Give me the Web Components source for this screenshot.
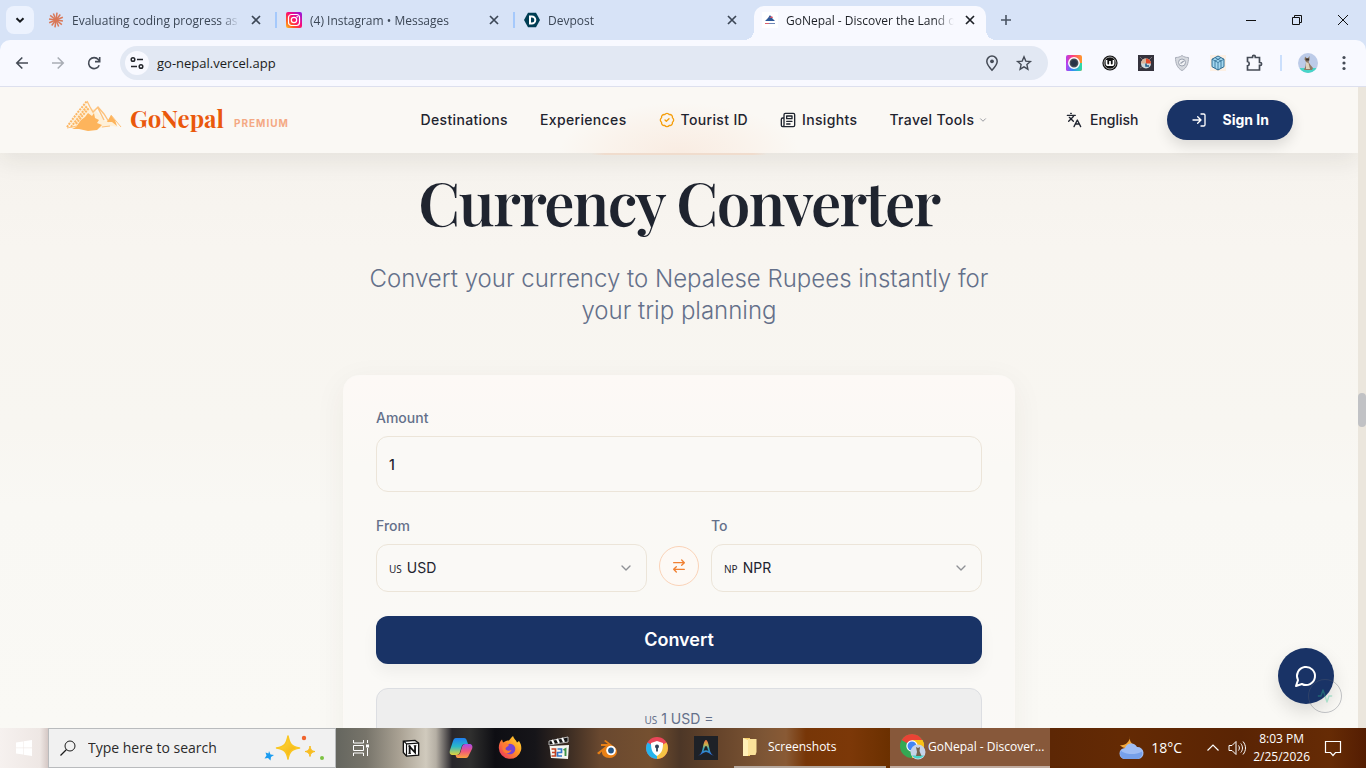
<!DOCTYPE html>
<html lang="en">
<head>
<meta charset="utf-8">
<meta name="viewport" content="width=device-width, initial-scale=1">
<title>GoNepal - Discover the Land of the Himalayas</title>
<style>
  html, body { margin: 0; height: 100%; }
  body {
    --ui: "Open Sans", "Noto Sans", sans-serif;
    --serif: "Playfair Display", "Liberation Serif", serif;
    --ink: #1f242f;
    --slate: #64708a;
    --navy: #193366;
    --orange: #ea580c;
    --line: #ece5d9;
    font-family: Inter, sans-serif;
    color: var(--ink);
    overflow: hidden;
  }
</style>
</head>
<body>
<app-desktop>
  <tab-strip slot="tabs">
    <browser-tab icon="claude">Evaluating coding progress as a beginner</browser-tab>
    <browser-tab icon="instagram">(4) Instagram • Messages</browser-tab>
    <browser-tab icon="devpost" last>Devpost</browser-tab>
    <browser-tab icon="gonepal" active>GoNepal - Discover the Land of the Himalayas</browser-tab>
  </tab-strip>
  <browser-toolbar slot="toolbar"></browser-toolbar>
  <web-page slot="page">
    <site-header slot="header"></site-header>
    <currency-section></currency-section>
    <chat-launcher slot="overlay"></chat-launcher>
  </web-page>
  <task-bar slot="taskbar"></task-bar>
</app-desktop>

<script>
const define = (name, html, setup) => {
  const tpl = document.createElement('template');
  tpl.innerHTML = html;
  customElements.define(name, class extends HTMLElement {
    constructor() {
      super();
      this.attachShadow({ mode: 'open' }).append(tpl.content.cloneNode(true));
    }
    connectedCallback() { if (setup) setup(this, this.shadowRoot); }
  });
};

const L = body => `<svg viewBox="0 0 24 24" fill="none" stroke="currentColor" stroke-width="2" stroke-linecap="round" stroke-linejoin="round">${body}</svg>`;
const S = (box, body) => `<svg viewBox="0 0 ${box} ${box}" fill="none">${body}</svg>`;
const rays = Array.from({ length: 12 }, (_, i) => `<path d="M8 8V${i % 2 ? 1 : 0.6}" transform="rotate(${i * 30 + 8} 8 8)"/>`).join('');

const ICONS = {
  'chevron-down': L('<path d="m6 9 6 6 6-6"/>'),
  'badge-check': L('<path d="M3.85 8.62a4 4 0 0 1 4.78-4.77 4 4 0 0 1 6.74 0 4 4 0 0 1 4.78 4.78 4 4 0 0 1 0 6.74 4 4 0 0 1-4.77 4.78 4 4 0 0 1-6.75 0 4 4 0 0 1-4.78-4.77 4 4 0 0 1 0-6.76Z"/><path d="m9 12 2 2 4-4"/>'),
  newspaper: L('<path d="M4 22h16a2 2 0 0 0 2-2V4a2 2 0 0 0-2-2H8a2 2 0 0 0-2 2v16a2 2 0 0 1-2 2Zm0 0a2 2 0 0 1-2-2v-9c0-1.100.9-2 2-2h2"/><path d="M18 14h-8M15 18h-5M10 6h8v4h-8z"/>'),
  languages: L('<path d="m5 8 6 6M4 14l6-6 2-3M2 5h12M7 2h1M22 22l-5-10-5 10M14 18h6"/>'),
  'log-in': L('<path d="M15 3h4a2 2 0 0 1 2 2v14a2 2 0 0 1-2 2h-4"/><path d="m10 17 5-5-5-5M15 12H3"/>'),
  swap: L('<path d="m16 3 4 4-4 4M20 7H4M8 21l-4-4 4-4M4 17h16"/>'),
  chat: L('<path d="M7.900 20A9 9 0 1 0 4 16.100L2 22Z"/>'),
  activity: L('<path d="M22 12h-4l-3 9L9 3l-3 9H2"/>'),
  close: S(16, '<path d="m4 4 8 8m0-8-8 8" stroke="currentColor" stroke-width="1.700"/>'),
  plus: S(16, '<path d="M8 3v10M3 8h10" stroke="currentColor" stroke-width="1.600"/>'),
  search: S(16, '<circle cx="10" cy="6" r="5" stroke="currentColor"/><path d="m6.500 9.500-6 6" stroke="currentColor" stroke-width="1.200"/>'),
  'tab-search': S(16, '<path d="m4.500 6.200 3.500 3.500 3.500-3.500" stroke="currentColor" stroke-width="2"/>'),
  back: S(16, '<path d="M14 8H3M8.300 2.500 2.800 8l5.500 5.500" stroke="currentColor" stroke-width="1.600"/>'),
  forward: S(16, '<path d="M2 8h11M7.700 2.500 13.200 8l-5.500 5.500" stroke="currentColor" stroke-width="1.600"/>'),
  reload: S(16, '<path d="M13.200 10.200A5.500 5.500 0 1 1 12.300 4.500L13.500 6" stroke="currentColor" stroke-width="1.600"/><path d="M13.700 2v4.600H9" stroke="currentColor" stroke-width="1.600"/>'),
  tune: S(16, '<circle cx="4" cy="4.500" r="1.800" stroke="currentColor" stroke-width="1.500"/><path d="M8 4.500h6M2 11.500h6" stroke="currentColor" stroke-width="1.600"/><circle cx="12" cy="11.500" r="1.800" stroke="currentColor" stroke-width="1.500"/>'),
  pin: S(16, '<path d="M8 15.200C4.500 11.500 2.800 9 2.800 6.300a5.200 5.200 0 0 1 10.400 0c0 2.700-1.700 5.200-5.200 8.900Z" stroke="currentColor" stroke-width="1.500"/><circle cx="8" cy="6.300" r="1.900" fill="currentColor"/>'),
  star: S(16, '<path d="m8 1.800 1.800 4.300 4.600.4-3.500 3.100 1 4.600L8 11.800l-3.900 2.400 1-4.600-3.500-3.100 4.600-.4Z" stroke="currentColor" stroke-width="1.400"/>'),
  puzzle: S(18, '<path d="M2.500 3.500h5V2.800a1.400 1.400 0 0 1 2.800 0v.7h4.200v5h.7a1.400 1.400 0 0 1 0 2.800h-.7v4.700h-12v-4.200a2.200 2.200 0 0 0 0-4.300Z" stroke="currentColor" stroke-width="1.700"/>'),
  dots: S(16, '<g fill="currentColor"><circle cx="8" cy="2.500" r="1.600"/><circle cx="8" cy="8" r="1.600"/><circle cx="8" cy="13.500" r="1.600"/></g>'),
  minimize: S(10, '<path d="M0 5.500h10" stroke="currentColor"/>'),
  restore: S(10, '<path d="M.5 2.500h7v7h-7zM2.500 2.500v-2h7v7h-2" stroke="currentColor"/>'),
  exit: S(10, '<path d="m0 0 10 10M10 0 0 10" stroke="currentColor"/>'),
  claude: S(16, `<g stroke="#d97757" stroke-width="1.500">${rays}</g>`),
  instagram: S(16, '<defs><linearGradient id="ig" x1="1" y1="0" x2="0" y2="1"><stop offset="0" stop-color="#8a1be8"/><stop offset=".45" stop-color="#fb0b78"/><stop offset=".75" stop-color="#ff5a1e"/><stop offset="1" stop-color="#ffc32a"/></linearGradient></defs><rect width="16" height="16" rx="2" fill="url(#ig)"/><rect x="2.500" y="2.500" width="11" height="11" rx="3" stroke="#fff" stroke-width="1.200"/><circle cx="8" cy="8" r="2.700" stroke="#fff" stroke-width="1.200"/><circle cx="11.200" cy="4.800" r=".8" fill="#fff"/>'),
  devpost: S(16, '<path d="M4 .8h8L16 8l-4 7.200H4L0 8Z" fill="#003e54"/><path d="M6 4.500h1.800a3.500 3.500 0 0 1 0 7H6Z" stroke="#fff" stroke-width="2"/>'),
  gonepal: S(16, '<path d="M0 0h16v16H0z" fill="#fff"/><path d="m3 9 3-3 2-3 2 3 3 3Z" fill="#2d5797"/><path d="m7 6 3-2 1 2Z" fill="#d2556b"/><path d="M3 11.500h4" stroke="#dc6370"/><path d="M7 11.500h6" stroke="#6f87b7"/>'),
  colorwheel: S(16, '<defs><linearGradient id="cw" x1="0" y1="0" x2="1" y2="0"><stop stop-color="#b43cf0"/><stop offset=".4" stop-color="#ff3f7c"/><stop offset="1" stop-color="#ff9a2a"/></linearGradient><linearGradient id="cw2" x1="0" y1="0" x2="1" y2="0"><stop stop-color="#c43cf0"/><stop offset=".4" stop-color="#2f8cf8"/><stop offset="1" stop-color="#2fe0a0"/></linearGradient></defs><rect width="16" height="16" rx="2" fill="url(#cw)"/><path d="M0 8h16v6a2 2 0 0 1-2 2H2a2 2 0 0 1-2-2Z" fill="url(#cw2)"/><circle cx="8" cy="8" r="5.200" fill="#454b57" stroke="#fff" stroke-width="1.500"/><circle cx="8" cy="8" r="3" fill="#273447"/>'),
  wave: S(16, '<circle cx="8" cy="8" r="7.600" fill="#111"/><circle cx="8" cy="8" r="6" stroke="#ccc" stroke-width=".8"/><path d="M4.500 5v3.500a1.700 1.700 0 0 0 3.500 0V6v2.500a1.700 1.700 0 0 0 3.500 0V5" stroke="#fff" stroke-width="1.700"/>'),
  timer: S(16, '<path d="M0 0h16v16H0z" fill="#35333d"/><path d="M2 2l3 3M14 2l-3 3M2 13l3-2" stroke="#76717a"/><circle cx="8" cy="8.500" r="5" fill="#cbd9dd"/><path d="M8 8.500v-5a5 5 0 0 1 5 5Z" fill="#e34b2b"/><path d="M8 3.500a5 5 0 0 0-5 5h5Z" fill="#d9b49a"/><path d="M8 8.500v2.500h3" stroke="#1f5b87" stroke-width="1.500"/>'),
  shield: S(16, '<path d="M8 .5C6 2 4 2.500 1.500 2.500 1.500 8 3 13 8 15.600c5-2.600 6.500-7.600 6.500-13.100C12 2.500 10 2 8 .5Z" fill="#d6d9df" stroke="#a9aeb9"/><circle cx="8" cy="7.500" r="3.500" fill="#f1f2f5" stroke="#9ca3b0"/><path d="M6.500 8.500 9.800 6" stroke="#9ca3b0" stroke-width="1.400"/>'),
  cube: S(16, '<path d="M0 0h16v16H0z" fill="#fdf0e4"/><path d="m8 1 6 3.200v7.500L8 15l-6-3.300V4.200Z" fill="#a4d8f0" stroke="#2c6a91"/><path d="m2 4.200 6 3.300 6-3.300M8 7.500V15M5 2.600l6 3.400v7M11 2.600 5 6v7" stroke="#2c6a91" stroke-width=".8"/>'),
  avatar: S(20, '<defs><clipPath id="av"><circle cx="10" cy="10" r="10"/></clipPath></defs><g clip-path="url(#av)"><path d="M0 0h20v20H0z" fill="#bccbe8"/><path d="M0 15h20v5H0z" fill="#47d5c8"/><path d="M7 3.500 8.500 5H10l1.500-2v4L10.500 9l2 3 2.500 3-1 2H6l1.500-4L8 9 6.500 6.500Z" fill="#8f7a63"/><path d="m8 9 2.500 1 1.500 6H8Z" fill="#ded2bd"/><path d="M7.500 5.500h3.500v2H8Z" fill="#3d3430"/></g>'),
  windows: S(16, '<path d="m0 2.400 7-1v6.200H0ZM7.600 1.300 16 0v7.600H7.600ZM0 8.300h7v6.300l-7-1ZM7.600 8.300H16V16l-8.400-1.300Z" fill="currentColor"/>'),
  sparkles: S(60, '<defs><linearGradient id="sp" x1="0" y1="0" x2="1" y2="1"><stop stop-color="#ffdf4a"/><stop offset="1" stop-color="#f2a900"/></linearGradient></defs><path d="M22 18c1.500 8 3.500 10.500 11.500 12-8 1.500-10 3.500-11.500 11-1.500-7.500-3.500-9.500-11.500-11 8-1.500 10-4 11.500-12Z" fill="url(#sp)" stroke="#f9c623" stroke-width="1.500" stroke-linejoin="round"/><path d="M44 28c.8 4 1.700 5 5 5.500-3.300.6-4.200 1.500-5 5-.8-3.500-1.700-4.400-5-5 3.300-.5 4.200-1.500 5-5.500Z" fill="#f8bd20" stroke="#f8bd20"/><path d="m3 33 1.500 3.500 3.500.5-3 2-.5 3.500L2 40l-3.500.5L.5 37.500-.5 34.500 2.500 35.500Z" fill="#1b9cf0"/><circle cx="38" cy="20" r="2.200" fill="#f0642d"/><circle cx="56" cy="40" r="2" fill="#7cc243"/>'),
  taskview: S(18, '<path d="M1.500 1v3h10V1M1.500 17v-3h10v3M1.500 6.500h10v5h-10zM15.500 1v3M15.500 9v8" stroke="currentColor"/><path d="M14 5.500h3v3h-3z" fill="currentColor"/>'),
  notion: S(20, '<path d="m1.500 2.500 13-1 4 3V18l-13.500 1-3.500-4Z" fill="#fff" stroke="#111" stroke-width="1.500"/><path d="m5 5.500 13-1M5 5.500V19M5 5.500l-3-3" stroke="#111" stroke-width="1.300"/><path d="M8.500 16V8.500L14.500 15V7.500" stroke="#111" stroke-width="2"/><path d="M7 8h3M13 7.500h3M7 16h3" stroke="#111"/>'),
  copilot: S(24, '<defs><linearGradient id="cp1" x1="0" y1="0" x2="0" y2="1"><stop stop-color="#1f7ef0"/><stop offset=".5" stop-color="#2ab9c9"/><stop offset="1" stop-color="#e4d239"/></linearGradient><linearGradient id="cp2" x1="0" y1="0" x2="0" y2="1"><stop stop-color="#a64cf0"/><stop offset=".5" stop-color="#f0567c"/><stop offset="1" stop-color="#fba33e"/></linearGradient></defs><path d="M7 2h8c2 0 2.500 1.500 3 3l1 3h-3c-2 0-3 1-3.500 3L11 16c-.5 2-1.500 3-3.500 3H4c-3 0-4-2-3-5L4 5c.7-2 1.500-3 3-3Z" fill="url(#cp1)"/><path d="M17 22H9c-2 0-2-1.500-2.500-3h1.500c2 0 3-1 3.500-3l1.500-5c.6-2 1.500-3 3.500-3H20c3 0 4 2 3 5l-3 6c-.7 2-1.500 3-3 3Z" fill="url(#cp2)"/>'),
  firefox: S(24, '<defs><linearGradient id="ff" x1="1" y1="0" x2="0" y2="1"><stop stop-color="#ffe437"/><stop offset=".45" stop-color="#ff9425"/><stop offset="1" stop-color="#ed2468"/></linearGradient></defs><path d="M15 0c1 3 3 4 4 6.500l2-1.500c2 3 2.800 6 2 9.500A11.300 11.300 0 0 1 .8 12C.8 8 2 5.500 4 3.500l1 3 3-1.500c1-.5 2-.5 3-.5 1-1 2-3 4-4.500Z" fill="url(#ff)"/><circle cx="12" cy="13" r="5.300" fill="#7543d4"/><path d="M4.500 8c3-1.500 5-1 6.500 1-1 2-3 1.500-3.500 3.500 0 2 3 3 6 1.500-1.500 4.500-8 4-9-.5Z" fill="#ff7a32"/>'),
  clapper: S(24, '<path d="M2 5 21 1v5L2 9Z" fill="#151515" stroke="#ddd" stroke-width=".8"/><path d="m5 4 2 4M10 3l2 4M15 2l2 4" stroke="#fff" stroke-width="2"/><path d="M2.500 10 22 9l-1 14-17-1Z" fill="#f5f5f0"/><path d="M4.500 13h4v7h-4M5 16.500h3.500" stroke="#c34223" stroke-width="1.700"/><path d="M10.500 13h4v3.500h-4V20h4.500" stroke="#3177c9" stroke-width="1.700"/><path d="m16.500 14 2-1v7" stroke="#3c9448" stroke-width="1.900"/>'),
  blender: S(24, '<path d="M1 17 10 10H5V8h7l-4-3 1.500-1 9 7c5 4 2 11-5 11-5 0-8-3-7.500-6.500L3 18.500Z" fill="#e98015"/><circle cx="15" cy="14.500" r="4.800" fill="#fff"/><circle cx="15" cy="14.500" r="2.900" fill="#265787"/>'),
  guard: S(24, '<circle cx="12" cy="12" r="11" fill="#ea4659"/><path d="M12 12 2.500 6.500A11 11 0 0 0 12 23Z" fill="#25b5ee"/><path d="M12 12 21.500 6.500A11 11 0 0 1 12 23Z" fill="#f6c344"/><path d="m12 5 6 2c0 6-1 10-6 13-5-3-6-7-6-13Z" fill="#fff"/><circle cx="12" cy="10.500" r="2" fill="#32435a"/><path d="M12 11v4.500" stroke="#32435a" stroke-width="1.800"/>'),
  arc: S(24, '<defs><linearGradient id="ar" x1="0" y1="0" x2="0" y2="1"><stop stop-color="#ee6b3d"/><stop offset=".3" stop-color="#c9b34b"/><stop offset=".55" stop-color="#34a8bb"/><stop offset="1" stop-color="#2f63e5"/></linearGradient></defs><path d="M0 0h24v24H0z" fill="#1e2127"/><path d="M4 19.500c4-1 4.500-7 5.500-11C10.200 5.500 11 4 12 4s1.800 1.500 2.500 4.500c1 4 1.500 10 5.500 11-3.500-.5-5.500-3.500-8-3.500s-4.500 3-8 3.500Z" fill="url(#ar)"/><path d="M9.500 15c1-2 1.200-5 2.500-5s1.500 3 2.500 5c-1.700-1-3.300-1-5 0Z" fill="#1e2127"/>'),
  folder: S(20, '<path d="M3 1h7v18H3z" fill="#f6cf6b"/><path d="M8 2h8.500v13l-1 3H8Z" fill="#fbe29a"/><path d="m3 1 5 2v16H3Z" fill="#fff0b8"/>'),
  chrome: S(26, '<circle cx="12" cy="12" r="12" fill="#34a853"/><path d="M12 12 1.600 6A12 12 0 0 1 22.400 6Z" fill="#ea4335"/><path d="M12 12h12A12 12 0 0 0 22.400 6H12Z" fill="#fbc116"/><path d="M12 24a12 12 0 0 0 10.400-18H12Z" fill="#fbc116"/><circle cx="12" cy="12" r="5.700" fill="#fff"/><circle cx="12" cy="12" r="4.500" fill="#4285f4"/><circle cx="18" cy="18" r="7.500" fill="#c6d3e8"/><path d="M12 21.500a7.500 7.500 0 0 0 12 0Z" fill="#47d5c8"/><path d="m16 13 2 1 2-1-.5 4 2 5h-5.500l1-4Z" fill="#75634f"/>'),
  weather: S(24, '<path d="M11 0c-1 4 1 8 5 9-1 5-7 6-10 3-3-.5-4-2-5-3 5 1 10-3 10-9Z" fill="#f3a83b"/><path d="M6 23a5.500 5.500 0 0 1 0-11 6.500 6.500 0 0 1 12-1 6 6 0 0 1 1 12Z" fill="#9fbdf4"/><path d="M6 23a5.500 5.500 0 0 1-4-8.500c3 4 14 5 21 1A6 6 0 0 1 19 23Z" fill="#76a0ea"/>'),
  'chevron-up': S(14, '<path d="m1.500 9.500 5.500-5.500 5.500 5.500" stroke="currentColor" stroke-width="1.200"/>'),
  volume: S(18, '<path d="M1 6.500h3l4-4v13l-4-4H1Z" stroke="currentColor"/><path d="M10.500 6.500c1.200 1.500 1.200 3.500 0 5M12.800 4.500c2.200 2.700 2.200 6.300 0 9M15 2.500c3.300 4 3.300 9 0 13" stroke="currentColor"/>'),
  notice: S(18, '<path d="M1.500 2.500h15v11h-5L9 16.500l-2.500-3h-5Z" stroke="currentColor" stroke-width="1.200"/>')
};

define('ui-icon', `<style>
  :host { display: block; flex: none; width: 16px; height: 16px; }
  svg { display: block; width: 100%; height: 100%; overflow: visible; }
</style>`, (el, root) => {
  root.innerHTML += ICONS[el.getAttribute('name')] || '';
});

define('mountain-logo', `<style>
  :host { display: block; flex: none; width: 56px; height: 32px; }
  svg { display: block; width: 100%; height: 100%; }
</style>
<svg viewBox="0 0 56 32" fill="none">
  <path d="M3 28 6 21 11 15 16 9 20 4 23 9 28 9 33 14 39 21 46 18 52 27 46 26 38 27 35 28 22 30 9 28Z" fill="#fef0d8"/>
  <path d="M10 27 15 20 19 17 22 13 26 16 28 13 29 18 33 20 31 23 36 25 31 30 22 31 13 29 6 29Z" fill="#fdb45c"/>
  <path d="M1 27 6 20 12 12 17 6 21 1M5 27l7-9 9-12M10 24l7-9 6-7" stroke="#fcb765" stroke-width="2" stroke-dasharray="2 1"/>
  <path d="m21 1 3 6 3 5 5-5 6 7 5 8M32 8l6 12" stroke="#fdc27c" stroke-width="1.400"/>
  <path d="m41 22 4-7 4 5 2 6-5-4Z" fill="#fdb45c"/>
  <path d="m45 15 10 12M1 28l10-2M36 27l8-1" stroke="#fdc27c"/>
</svg>`);

define('app-desktop', `<style>
  :host { display: grid; grid-template-rows: auto auto minmax(0, 1fr) auto; height: 100vh; background: #d7e3f7; }
  ::slotted(*) { min-width: 0; min-height: 0; }
</style>
<slot name="tabs"></slot><slot name="toolbar"></slot><slot name="page"></slot><slot name="taskbar"></slot>`);

define('tab-strip', `<style>
  :host { display: flex; align-items: flex-end; height: 40px; font: 12px/16px var(--ui); color: #3c4756; }
  button { border: 0; padding: 0; background: none; color: inherit; display: grid; place-items: center; }
  .menu { width: 28px; height: 28px; margin: 0 6px; align-self: center; border-radius: 8px; background: #ecf2fe; color: #16191e; }
  .tabs { display: flex; flex: 0 1 952px; min-width: 0; }
  .new { width: 28px; height: 40px; color: #4a5463; }
  .window { display: flex; margin-left: auto; align-self: flex-start; color: #111; }
  .window button { width: 46px; height: 40px; }
  .window ui-icon { width: 10px; height: 10px; }
</style>
<button class="menu" aria-label="Search tabs"><ui-icon name="tab-search"></ui-icon></button>
<div class="tabs"><slot></slot></div>
<button class="new" aria-label="New tab"><ui-icon name="plus"></ui-icon></button>
<div class="window">
  <button aria-label="Minimize"><ui-icon name="minimize"></ui-icon></button>
  <button aria-label="Restore"><ui-icon name="restore"></ui-icon></button>
  <button aria-label="Close window"><ui-icon name="exit"></ui-icon></button>
</div>`);

define('browser-tab', `<style>
  :host { display: block; flex: 1 1 238px; min-width: 0; box-sizing: border-box; padding-right: 6px; }
  .tab { position: relative; display: flex; align-items: center; gap: 8px; height: 34px; padding: 0 8px 6px; box-sizing: border-box; }
  .title { flex: 1; min-width: 0; padding-top: 2px; white-space: nowrap; overflow: hidden; -webkit-mask-image: linear-gradient(90deg, #000 calc(100% - 20px), transparent); mask-image: linear-gradient(90deg, #000 calc(100% - 20px), transparent); }
  button { border: 0; padding: 0; width: 16px; height: 16px; background: none; color: inherit; }
  .edge { position: absolute; right: -5px; top: 6px; width: 2px; height: 16px; background: #a5c9fc; }
  :host([active]) .tab { background: #f8f9ff; border-radius: 10px 10px 0 0; color: #1d2026; }
  :host([active]) .edge, :host([last]) .edge { display: none; }
  :host([active]) .tab::before, :host([active]) .tab::after { content: ""; position: absolute; bottom: 0; width: 10px; height: 10px; }
  :host([active]) .tab::before { right: 100%; background: radial-gradient(circle at 0 0, transparent 10px, #f8f9ff 10px); }
  :host([active]) .tab::after { left: 100%; background: radial-gradient(circle at 100% 0, transparent 10px, #f8f9ff 10px); }
</style>
<div class="tab"><ui-icon></ui-icon><span class="title"><slot></slot></span><button aria-label="Close tab"><ui-icon name="close"></ui-icon></button><span class="edge"></span></div>`,
(el, root) => {
  const icon = document.createElement('ui-icon');
  icon.setAttribute('name', el.getAttribute('icon'));
  root.querySelector('ui-icon').replaceWith(icon);
});

define('browser-toolbar', `<style>
  :host { display: flex; align-items: center; height: 46px; padding: 0 4px; background: #f8f9ff; border-bottom: 1px solid #dde0ee; border-radius: 10px 10px 0 0; color: #454b56; }
  button { flex: none; display: grid; place-items: center; width: 36px; height: 36px; border: 0; padding: 0; background: none; color: inherit; }
  .fwd { color: #a9adb5; }
  .bar { flex: 1; display: flex; align-items: center; height: 34px; margin: 0 8px; box-sizing: border-box; padding: 0 8px 0 5px; border-radius: 17px; background: #e2e8f3; }
  .bar button { width: 32px; height: 34px; }
  .bar .site { width: 24px; height: 24px; border-radius: 12px; background: #f8f9ff; color: #22252b; }
  input { flex: 1; min-width: 0; margin: 0 0 0 8px; padding: 0; border: 0; background: none; outline: 0; font: 13px/20px var(--ui); color: #1b1c20; }
  .rule { width: 2px; height: 16px; margin: 0 8px; background: #cbdffc; }
  .big { width: 20px; height: 20px; }
  .mid { width: 18px; height: 18px; }
</style>
<button aria-label="Back"><ui-icon name="back"></ui-icon></button>
<button class="fwd" aria-label="Forward"><ui-icon name="forward"></ui-icon></button>
<button aria-label="Reload"><ui-icon name="reload"></ui-icon></button>
<div class="bar">
  <button class="site" aria-label="Site information"><ui-icon name="tune"></ui-icon></button>
  <input aria-label="Address" value="go-nepal.vercel.app">
  <button aria-label="Location"><ui-icon name="pin"></ui-icon></button>
  <button aria-label="Bookmark"><ui-icon name="star"></ui-icon></button>
</div>
<button aria-label="Color picker"><ui-icon name="colorwheel"></ui-icon></button>
<button aria-label="Wave"><ui-icon name="wave"></ui-icon></button>
<button aria-label="Timer"><ui-icon name="timer"></ui-icon></button>
<button aria-label="Shield"><ui-icon name="shield"></ui-icon></button>
<button aria-label="Cube"><ui-icon name="cube"></ui-icon></button>
<button aria-label="Extensions"><ui-icon class="mid" name="puzzle"></ui-icon></button>
<span class="rule"></span>
<button aria-label="Profile"><ui-icon class="big" name="avatar"></ui-icon></button>
<button aria-label="Menu"><ui-icon name="dots"></ui-icon></button>`);

define('web-page', `<style>
  :host { position: relative; display: flex; overflow: hidden; }
  .view { position: relative; flex: 1; min-width: 0; overflow: hidden; background: linear-gradient(#f4f1ec, #f8f5f0 160px, #f8f6f1 340px, #f9f8f4 420px, #faf9f5); }
  .scroll { flex: none; width: 8px; background: #ebe6dd; }
  .thumb { height: 34px; margin-top: 306px; border-radius: 4px; background: #c1c2c5; }
</style>
<div class="view"><slot name="header"></slot><slot></slot><slot name="overlay"></slot></div>
<div class="scroll"><div class="thumb"></div></div>`);

define('site-header', `<style>
  :host { position: relative; z-index: 1; display: flex; align-items: center; justify-content: space-between; height: 66px; padding: 0 65px; background: radial-gradient(120px 50px at 50% 100%, #f9ece2, #faf3ec 60%, transparent) #faf8f4; box-shadow: 0 8px 24px rgba(40, 35, 25, .08); font-size: 14px; line-height: 20px; font-weight: 500; }
  a { color: inherit; text-decoration: none; display: flex; align-items: center; gap: 6px; white-space: nowrap; }
  .brand { gap: 8px; padding: 0 54px 4px 1px; }
  .brand mountain-logo { margin-bottom: 4px; }
  .name { font: 700 24px/32px var(--serif); color: var(--orange); }
  .tier { margin: 10px 0 0 2px; font-size: 10px; font-weight: 700; letter-spacing: 1px; color: #f4a984; }
  nav, .side { display: flex; align-items: center; gap: 32px; }
  nav { letter-spacing: .025em; }
  .side { gap: 28px; }
  .gold { color: #f59e0b; }
  .tiny { width: 10px; height: 10px; color: #85888f; }
  button { display: flex; align-items: center; gap: 8px; border: 0; padding: 0; background: none; font: inherit; letter-spacing: inherit; color: inherit; white-space: nowrap; }
  nav button { gap: 4px; }
  .sign { gap: 16px; height: 40px; padding: 0 24px; border-radius: 20px; background: var(--navy); color: #fff; font-weight: 700; box-shadow: 0 6px 14px rgba(0, 0, 0, .12); }
</style>
<a class="brand" href="#"><mountain-logo></mountain-logo><span class="name">GoNepal</span><span class="tier">PREMIUM</span></a>
<nav>
  <a href="#">Destinations</a>
  <a href="#">Experiences</a>
  <a href="#"><ui-icon class="gold" name="badge-check"></ui-icon>Tourist ID</a>
  <a href="#"><ui-icon name="newspaper"></ui-icon>Insights</a>
  <button>Travel Tools<ui-icon class="tiny" name="chevron-down"></ui-icon></button>
</nav>
<div class="side">
  <button><ui-icon name="languages"></ui-icon>English</button>
  <button class="sign"><ui-icon name="log-in"></ui-icon>Sign In</button>
</div>`);

define('currency-section', `<style>
  :host { display: flex; flex-direction: column; align-items: center; padding: 0 24px; }
  .glow { width: 176px; height: 2px; border-radius: 0 0 8px 8px; background: linear-gradient(90deg, transparent, #f0dccd 8%, #f0dccd 92%, transparent); position: relative; z-index: 2; }
  h2 { margin: 10px 0 0; font: 600 60px/72px var(--serif); letter-spacing: -.025em; text-align: center; }
  p { margin: 26px 0 0; max-width: 672px; font-size: 24px; line-height: 32px; font-weight: 300; color: var(--slate); text-align: center; }
  convert-card { margin-top: 48px; width: 100%; max-width: 672px; }
</style>
<div class="glow"></div>
<h2>Currency Converter</h2>
<p>Convert your currency to Nepalese Rupees instantly for your trip planning</p>
<convert-card></convert-card>`);

define('convert-card', `<style>
  :host { display: block; box-sizing: border-box; padding: 32px; border: 1px solid #fcf9f6; border-radius: 16px; background: linear-gradient(#fdf9f6, #faf9f5 90px, #faf9f7); box-shadow: 0 8px 32px rgba(60, 50, 30, .06); font-size: 14px; line-height: 20px; }
  form { display: flex; flex-direction: column; gap: 24px; }
  .field { display: flex; flex-direction: column; gap: 8px; min-width: 0; }
  label { font-weight: 500; color: var(--slate); }
  input, .pick { box-sizing: border-box; border: 1px solid var(--line); border-radius: 12px; background: #faf9f6; color: var(--ink); }
  input { width: 100%; height: 56px; padding: 0 12px; font: 500 14px/20px Inter, sans-serif; outline: 0; }
  .pair { display: grid; grid-template-columns: 1fr 40px 1fr; gap: 12px; align-items: end; }
  .pick { display: flex; align-items: center; gap: 5px; height: 48px; padding: 0 12px; }
  small { font: 10px/20px "Noto Sans", sans-serif; }
  .pick small { padding-top: 2px; }
  select { flex: 1; min-width: 0; height: 46px; border: 0; padding: 0; margin: 0; appearance: none; background: none; font: 14px/20px Inter, sans-serif; color: inherit; outline: 0; }
  .pick ui-icon { color: #8f9196; }
  .swap { display: grid; place-items: center; width: 40px; height: 40px; margin-bottom: 6px; padding: 0; border: 1px solid #fad3b8; border-radius: 20px; background: #fdf9f5; color: #f08032; }
  .go { height: 48px; border: 0; border-radius: 12px; background: var(--navy); color: #fff; font: 600 18px/28px Inter, sans-serif; box-shadow: 0 8px 16px rgba(0, 0, 0, .05); }
  output { box-sizing: border-box; height: 128px; padding: 20px; border: 1px solid #dcdee2; border-radius: 12px; background: #eee; color: var(--slate); text-align: center; }
</style>
<form>
  <div class="field"><label for="amount">Amount</label><input id="amount" type="text" inputmode="decimal" value="1"></div>
  <div class="pair">
    <div class="field"><label for="from">From</label><div class="pick"><small>US</small><select id="from"><option>USD</option><option>NPR</option></select><ui-icon name="chevron-down"></ui-icon></div></div>
    <button class="swap" type="button" aria-label="Swap currencies"><ui-icon name="swap"></ui-icon></button>
    <div class="field"><label for="to">To</label><div class="pick"><small>NP</small><select id="to"><option>NPR</option><option>USD</option></select><ui-icon name="chevron-down"></ui-icon></div></div>
  </div>
  <button class="go" type="button">Convert</button>
  <output for="amount from to"><small>US</small> 1 USD =</output>
</form>`);

define('chat-launcher', `<style>
  :host { position: absolute; right: 16px; bottom: 15px; width: 64px; height: 65px; z-index: 2; }
  button { position: absolute; box-sizing: border-box; display: grid; place-items: center; padding: 0; border: 0; border-radius: 50%; }
  .chat { left: 0; top: 0; width: 56px; height: 56px; background: var(--navy); color: #fff; box-shadow: 0 8px 18px rgba(0, 0, 0, .12); }
  .chat ui-icon { width: 24px; height: 24px; }
  .pulse { right: 0; bottom: 0; width: 34px; height: 34px; border: 1px solid rgba(90, 95, 110, .35); background: none; color: rgba(50, 200, 150, .35); }
</style>
<button class="chat" aria-label="Open chat"><ui-icon name="chat"></ui-icon></button>
<button class="pulse" aria-label="Status"><ui-icon name="activity"></ui-icon></button>`);

define('task-bar', `<style>
  :host { display: flex; align-items: stretch; height: 40px; font: 12px/16px var(--ui); color: #fff;
    background: linear-gradient(90deg, #f6f1ef 0, #eee7e4 40px, #d5c8c5 48px, #65665f 336px, #77746a 366px, #aaa294 400px, #d0cabd 426px, #b5afa4 436px, #28262b 452px, #30302f 470px, #0e0e13 495px, #161519 535px, #332720 562px, #69482f 600px, #755030 650px, #4d3727 680px, #67452b 720px, #7e5635 765px, #895a35 786px, #773607 806px, #7c3808 850px, #6b3000 890px, #5d2705 1051px, #642a04 1120px, #5a2404 1240px, #662b05 1330px, #541d02 1366px); }
  button { display: grid; place-items: center; flex: none; border: 0; padding: 0; background: none; color: inherit; font: inherit; }
  .start { width: 48px; }
  .find { display: flex; align-items: center; box-sizing: border-box; flex: none; width: 288px; padding: 0 9px 0 11px; border: 1px solid #b9bbbd; background: #f1f1f1; color: #1c1c1c; }
  .find input { flex: 1; min-width: 0; margin: 0 0 0 12px; padding: 0; border: 0; background: none; outline: 0; font: 14px/20px var(--ui); color: #2b2b2b; }
  .find input::placeholder { color: #2b2b2b; opacity: 1; }
  .spark { width: 60px; height: 60px; margin: -10px 0; }
  .app { width: 49px; }
  .app ui-icon { width: 24px; height: 24px; }
  .app.sm ui-icon, .app.nt ui-icon { width: 18px; height: 18px; }
  .app.nt { width: 51px; }
  .task { display: flex; align-items: center; box-sizing: border-box; width: 152px; margin-left: 4px; padding: 0 6px; gap: 8px; border-bottom: 2px solid #b6a99f; white-space: nowrap; }
  .task ui-icon { width: 20px; height: 20px; }
  .task.on { width: 160px; padding: 0 10px; gap: 2px; background: #87583a; border-bottom-color: #c1aca0; }
  .task.on ui-icon { width: 26px; height: 26px; }
  .tray { display: flex; align-items: center; margin-left: auto; padding-right: 24px; }
  .wx { display: flex; align-items: center; gap: 8px; font-size: 14px; line-height: 20px; margin-right: 24px; }
  .wx ui-icon { width: 24px; height: 24px; }
  .up { width: 14px; margin-right: 8px; }
  .up ui-icon { width: 14px; height: 14px; }
  .vol ui-icon, .note ui-icon { width: 18px; height: 18px; }
  .clock { margin: 0 14px 0 7px; text-align: center; font-size: 12px; line-height: 18px; }
</style>
<button class="start" aria-label="Start"><ui-icon name="windows"></ui-icon></button>
<div class="find"><ui-icon name="search"></ui-icon><input aria-label="Search" placeholder="Type here to search"><ui-icon class="spark" name="sparkles"></ui-icon></div>
<button class="app sm" aria-label="Task view"><ui-icon name="taskview"></ui-icon></button>
<button class="app nt" aria-label="Notion"><ui-icon name="notion"></ui-icon></button>
<button class="app" aria-label="Copilot"><ui-icon name="copilot"></ui-icon></button>
<button class="app" aria-label="Firefox"><ui-icon name="firefox"></ui-icon></button>
<button class="app" aria-label="Media player"><ui-icon name="clapper"></ui-icon></button>
<button class="app" aria-label="Blender"><ui-icon name="blender"></ui-icon></button>
<button class="app" aria-label="Secure browser"><ui-icon name="guard"></ui-icon></button>
<button class="app" aria-label="Arc"><ui-icon name="arc"></ui-icon></button>
<button class="task"><ui-icon name="folder"></ui-icon>Screenshots</button>
<button class="task on"><ui-icon name="chrome"></ui-icon>GoNepal - Discover...</button>
<div class="tray">
  <button class="wx"><ui-icon name="weather"></ui-icon>18°C</button>
  <button class="up" aria-label="Hidden icons"><ui-icon name="chevron-up"></ui-icon></button>
  <button class="vol" aria-label="Volume"><ui-icon name="volume"></ui-icon></button>
  <button class="clock"><span>8:03 PM</span><span>2/25/2026</span></button>
  <button class="note" aria-label="Notifications"><ui-icon name="notice"></ui-icon></button>
</div>`);
</script>
</body>
</html>
